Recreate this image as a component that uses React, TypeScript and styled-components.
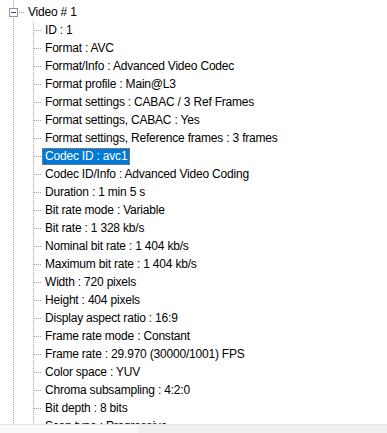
import React from "react";
import styled, { createGlobalStyle } from "styled-components";

const fields: string[] = [
  "ID : 1",
  "Format : AVC",
  "Format/Info : Advanced Video Codec",
  "Format profile : Main@L3",
  "Format settings : CABAC / 3 Ref Frames",
  "Format settings, CABAC : Yes",
  "Format settings, Reference frames : 3 frames",
  "Codec ID : avc1",
  "Codec ID/Info : Advanced Video Coding",
  "Duration : 1 min 5 s",
  "Bit rate mode : Variable",
  "Bit rate : 1 328 kb/s",
  "Nominal bit rate : 1 404 kb/s",
  "Maximum bit rate : 1 404 kb/s",
  "Width : 720 pixels",
  "Height : 404 pixels",
  "Display aspect ratio : 16:9",
  "Frame rate mode : Constant",
  "Frame rate : 29.970 (30000/1001) FPS",
  "Color space : YUV",
  "Chroma subsampling : 4:2:0",
  "Bit depth : 8 bits",
  "Scan type : Progressive",
];

const SELECTED = "Codec ID : avc1";

const dotsV = "repeating-linear-gradient(to bottom, #a0a0a0 0 1px, transparent 1px 2px)";
const dotsH = "repeating-linear-gradient(to right, #a0a0a0 0 1px, transparent 1px 2px)";

const GlobalStyle = createGlobalStyle`
  html, body {
    margin: 0;
    padding: 0;
    background: #ffffff;
  }
  body {
    font-family: "Segoe UI", "Liberation Sans", Arial, sans-serif;
    font-size: 12px;
    letter-spacing: -0.2px;
    color: #000000;
  }
`;

const Window = styled.div`
  width: 387px;
  height: 433px;
  display: flex;
  flex-direction: column;
  overflow: hidden;
  background: #ffffff;
`;

const TreeArea = styled.div`
  flex: 1;
  overflow: hidden;
  padding-top: 3px;
  background: ${dotsV} 13px 0 / 1px 100% no-repeat;
`;

const List = styled.ul`
  list-style: none;
  margin: 0;
  padding: 0;
`;

const ChildList = styled(List)`
  background: ${dotsV} 33px 1px / 1px 100% no-repeat;
`;

const Row = styled.div<{ $indent: number }>`
  height: 18px;
  display: flex;
  align-items: center;
  padding-left: ${(p) => p.$indent}px;
  white-space: nowrap;
`;

const Expander = styled.span`
  width: 7px;
  height: 7px;
  border: 1px solid #919191;
  background: #ffffff;
  display: flex;
  align-items: center;
  justify-content: center;
  flex: none;

  &::after {
    content: "";
    width: 5px;
    height: 1px;
    background: #2b4f7e;
  }
`;

const Connector = styled.span<{ $width: number }>`
  width: ${(p) => p.$width}px;
  height: 1px;
  flex: none;
  background: ${dotsH};
`;

const Label = styled.span<{ $selected?: boolean }>`
  height: 17px;
  line-height: 17px;
  padding: 0 2px;
  margin-left: 1px;
  box-sizing: border-box;
  border: 1px dotted ${(p) => (p.$selected ? "#d0782c" : "transparent")};
  background: ${(p) => (p.$selected ? "#0078d7" : "transparent")};
  color: ${(p) => (p.$selected ? "#ffffff" : "#000000")};
  display: flex;
  align-items: center;
`;

const ScrollBar = styled.div`
  height: 8px;
  flex: none;
  border-top: 1px solid #e4e4e4;
  display: flex;
  background: #f0f0f0;
`;

const Thumb = styled.div`
  width: 138px;
  background: #fafafa;
`;

export default function App() {
  return (
    <>
      <GlobalStyle />
      <Window>
        <TreeArea>
          <List>
            <li>
              <Row $indent={9}>
                <Expander />
                <Connector $width={5} style={{ marginLeft: 1 }} />
                <Label>Video # 1</Label>
              </Row>
              <ChildList>
                {fields.map((f) => (
                  <li key={f}>
                    <Row $indent={34}>
                      <Connector $width={7} />
                      <Label $selected={f === SELECTED}>{f}</Label>
                    </Row>
                  </li>
                ))}
              </ChildList>
            </li>
          </List>
        </TreeArea>
        <ScrollBar>
          <Thumb />
        </ScrollBar>
      </Window>
    </>
  );
}
